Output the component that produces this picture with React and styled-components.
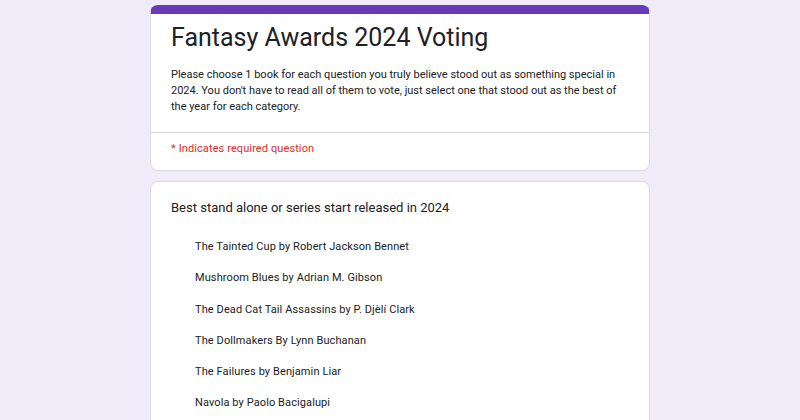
import React from 'react';
import styled, { createGlobalStyle } from 'styled-components';

const GlobalStyle = createGlobalStyle`
    html, body {
        margin: 0;
        padding: 0;
        background: #f0ebf8;
        font-family: Roboto, "Liberation Sans", Arial, sans-serif;
        color: #202124;
    }
`;

const Page = styled.div`
    width: 500px;
    margin: 0 auto;
    padding-top: 5px;
    display: flex;
    flex-direction: column;
    gap: 10px;
`;

const Card = styled.div`
    background: #fff;
    border-radius: 8px;
    border: 1px solid #dadce0;
    overflow: hidden;
    box-sizing: border-box;
`;

const HeaderCard = styled(Card)`
    border-top: 9px solid #673ab7;
`;

const HeaderTop = styled.div`
    padding: 6px 20px 17px;
    border-bottom: 1px solid #dadce0;
`;

const Title = styled.h1`
    margin: 0;
    font-weight: 400;
    font-size: 25px;
    line-height: 36px;
    letter-spacing: 0;
`;

const Description = styled.p`
    margin: 11px 0 0;
    font-size: 11px;
    line-height: 16px;
    letter-spacing: 0;
    white-space: nowrap;
`;

const Required = styled.div`
    padding: 8px 20px 13px;
    font-size: 11px;
    line-height: 16px;
    color: #d93025;
    letter-spacing: 0.1px;
`;

const QuestionCard = styled(Card)`
    padding: 16px 20px 40px;
    border-bottom: none;
    border-radius: 8px 8px 0 0;
`;

const QuestionTitle = styled.div`
    font-size: 13px;
    line-height: 20px;
    letter-spacing: 0;
`;

const Options = styled.ul`
    list-style: none;
    margin: 13px 0 0;
    padding: 0 0 0 24px;
    display: flex;
    flex-direction: column;
`;

const Option = styled.li`
    font-size: 11px;
    line-height: 31.3px;
    letter-spacing: 0.1px;
`;

const options = [
    'The Tainted Cup by Robert Jackson Bennet',
    'Mushroom Blues by Adrian M. Gibson',
    'The Dead Cat Tail Assassins by P. Djèlí Clark',
    'The Dollmakers By Lynn Buchanan',
    'The Failures by Benjamin Liar',
    'Navola by Paolo Bacigalupi',
];

export default function App() {
    return (
        <>
            <GlobalStyle />
            <Page>
                <HeaderCard>
                    <HeaderTop>
                        <Title>Fantasy Awards 2024 Voting</Title>
                        <Description>
                            Please choose 1 book for each question you truly believe stood out as something special in
                            <br />
                            2024. You don't have to read all of them to vote, just select one that stood out as the best of
                            <br />
                            the year for each category.
                        </Description>
                    </HeaderTop>
                    <Required>* Indicates required question</Required>
                </HeaderCard>
                <QuestionCard>
                    <QuestionTitle>Best stand alone or series start released in 2024</QuestionTitle>
                    <Options>
                        {options.map((o) => (
                            <Option key={o}>{o}</Option>
                        ))}
                    </Options>
                </QuestionCard>
            </Page>
        </>
    );
}
